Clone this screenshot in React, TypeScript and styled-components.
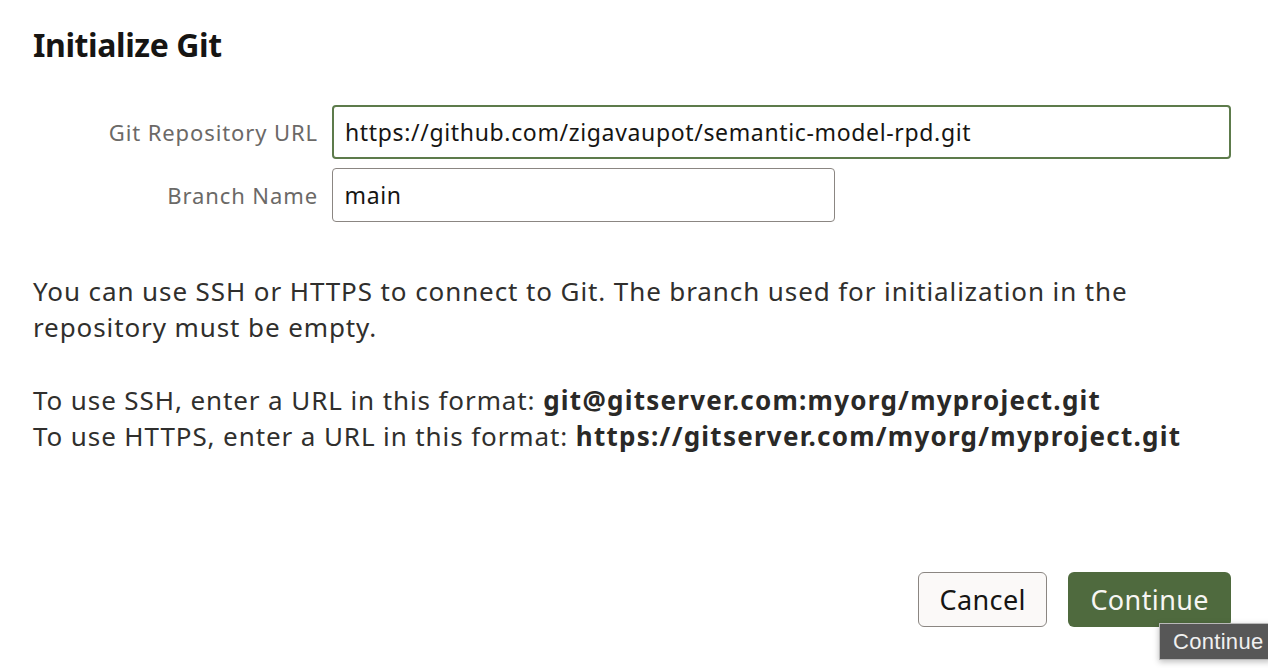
import React from "react";
import styled, { createGlobalStyle } from "styled-components";

const Global = createGlobalStyle`
  html, body { margin: 0; padding: 0; background: #ffffff; }
  body { font-family: "Noto Sans", "Open Sans", sans-serif; color: #2b2a28; }
  * { box-sizing: border-box; }
`;

const Dialog = styled.div`
  position: relative;
  width: 1268px;
  height: 668px;
  overflow: hidden;
  padding: 25px 37px 0 33px;
  display: flex;
  flex-direction: column;
`;

const Title = styled.h1`
  margin: 0;
  font-size: 32px;
  font-weight: 700;
  line-height: 40px;
  color: #161513;
  letter-spacing: -0.4px;
`;

const Form = styled.div`
  margin-top: 40px;
  display: grid;
  grid-template-columns: 285px 1fr;
  column-gap: 14px;
  row-gap: 9px;
  align-items: center;
`;

const Label = styled.label`
  text-align: right;
  font-size: 22px;
  letter-spacing: 0.9px;
  color: #6b6967;
  line-height: 54px;
  white-space: nowrap;
`;

const Input = styled.div<{ $focused?: boolean; $width?: number }>`
  height: 54px;
  width: ${(p) => (p.$width ? `${p.$width}px` : "100%")};
  border: ${(p) => (p.$focused ? "2px solid #5d7b4b" : "1.5px solid #8b8682")};
  border-radius: 4px;
  padding: 0 ${(p) => (p.$focused ? "11px" : "11.5px")};
  display: flex;
  align-items: center;
  font-size: 23px;
  letter-spacing: 0.65px;
  color: #161513;
  background: #fff;
  white-space: nowrap;
`;

const Help = styled.div`
  margin-top: 51px;
  font-size: 26px;
  letter-spacing: 0.9px;
  line-height: 36px;
  color: #302f2d;
`;

const Para = styled.p`
  margin: 0 0 37px 0;
`;

const Strong = styled.b`
  font-weight: 700;
  letter-spacing: 1.25px;
  color: #2a2927;
`;

const Footer = styled.div`
  margin-top: auto;
  margin-bottom: 41px;
  display: flex;
  justify-content: flex-end;
  gap: 21px;
`;

const Button = styled.button<{ $primary?: boolean }>`
  height: 55px;
  padding: 0 ${(p) => (p.$primary ? "22px" : "20.5px")};
  border-radius: 6px;
  font-family: "Noto Sans", "Open Sans", sans-serif;
  font-size: 27px;
  letter-spacing: 0.4px;
  border: ${(p) => (p.$primary ? "none" : "1.5px solid #8b8682")};
  background: ${(p) => (p.$primary ? "#4f6a3e" : "#fbf9f8")};
  color: ${(p) => (p.$primary ? "#f7f6f3" : "#161513")};
  cursor: pointer;
`;

const Tooltip = styled.div`
  position: absolute;
  left: 1159px;
  top: 623px;
  height: 37px;
  padding: 0 8px 0 13px;
  background: #575757;
  border: 1px solid #b9b9b9;
  color: #f0f0f0;
  font-family: "Liberation Sans", Arial, sans-serif;
  font-size: 22px;
  letter-spacing: 0.3px;
  display: flex;
  align-items: center;
  box-shadow: 0 2px 6px rgba(0, 0, 0, 0.25);
  white-space: nowrap;
`;

export default function App() {
  return (
    <>
      <Global />
      <Dialog>
        <Title>Initialize Git</Title>
        <Form>
          <Label>Git Repository URL</Label>
          <Input $focused>https://github.com/zigavaupot/semantic-model-rpd.git</Input>
          <Label>Branch Name</Label>
          <Input $width={503}>main</Input>
        </Form>
        <Help>
          <Para>
            You can use SSH or HTTPS to connect to Git. The branch used for initialization in the
            repository must be empty.
          </Para>
          <Para>
            To use SSH, enter a URL in this format: <Strong>git@gitserver.com:myorg/myproject.git</Strong>
            <br />
            To use HTTPS, enter a URL in this format: <Strong>https://gitserver.com/myorg/myproject.git</Strong>
          </Para>
        </Help>
        <Footer>
          <Button>Cancel</Button>
          <Button $primary>Continue</Button>
        </Footer>
        <Tooltip>Continue</Tooltip>
      </Dialog>
    </>
  );
}
